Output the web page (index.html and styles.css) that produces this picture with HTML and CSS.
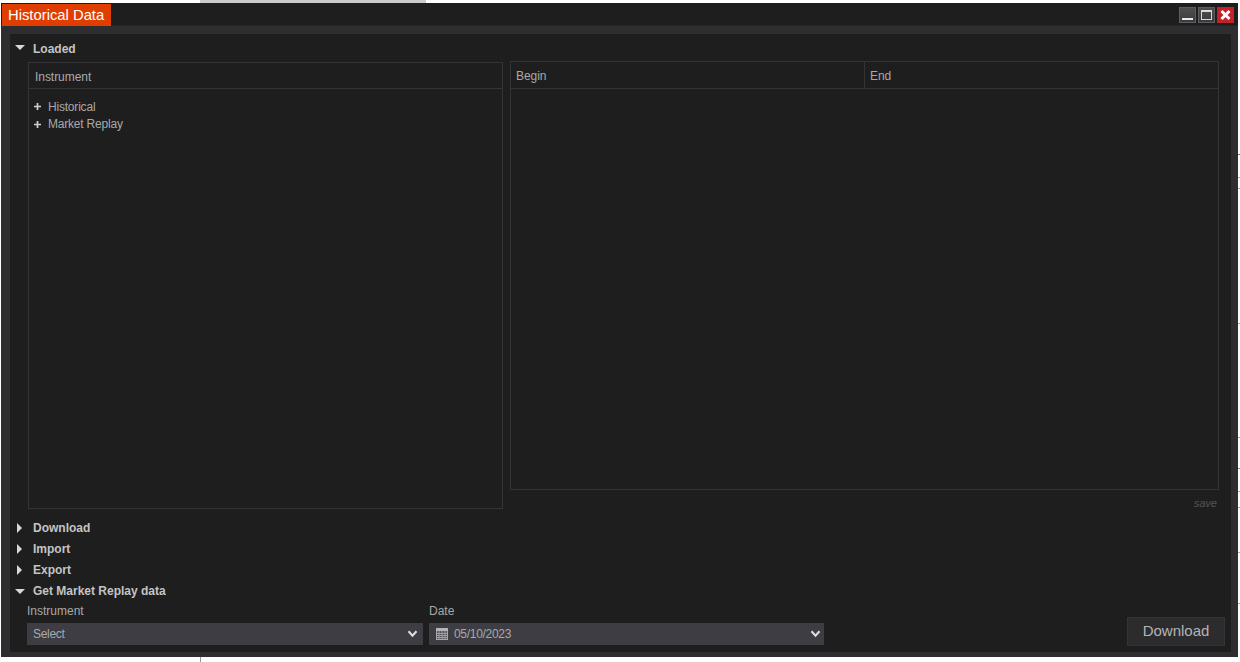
FILE: index.html
```html
<!DOCTYPE html>
<html lang="en">
<head>
<meta charset="utf-8">
<title>Historical Data</title>
<link rel="stylesheet" href="styles.css">
</head>
<body>
<div class="top-strip"><div class="top-strip-fill"></div></div>
<div class="window">
  <header class="titlebar">
    <div class="title">Historical Data</div>
    <div class="win-buttons">
      <div class="win-btn"><svg width="17" height="16" viewBox="0 0 17 16"><rect x="3" y="11" width="11" height="2" fill="#e8e8e8"/></svg></div>
      <div class="win-btn"><svg width="17" height="16" viewBox="0 0 17 16"><rect x="3.5" y="3.5" width="10" height="9" fill="none" stroke="#d8d8d8"/><rect x="3" y="3" width="11" height="2" fill="#d8d8d8"/></svg></div>
      <div class="win-btn close"><svg width="17" height="16" viewBox="0 0 17 16"><path d="M4.5 4l8 8M12.5 4l-8 8" stroke="#fff" stroke-width="3"/></svg></div>
    </div>
  </header>
  <main class="panel">
    <div class="section-head first"><span class="tri-down"></span>Loaded</div>
    <div class="loaded">
      <section class="box left-box">
        <div class="box-head"><div class="cell">Instrument</div></div>
        <ul class="tree">
          <li><svg class="plus" width="7" height="7" viewBox="0 0 7 7"><path d="M3.5 0v7M0 3.5h7" stroke="#d0d0d0" stroke-width="1.7"/></svg>Historical</li>
          <li><svg class="plus" width="7" height="7" viewBox="0 0 7 7"><path d="M3.5 0v7M0 3.5h7" stroke="#d0d0d0" stroke-width="1.7"/></svg>Market Replay</li>
        </ul>
      </section>
      <div class="right-col">
        <section class="box right-box">
          <div class="box-head">
            <div class="cell begin">Begin</div>
            <div class="cell end">End</div>
          </div>
        </section>
        <div class="save">save</div>
      </div>
    </div>
    <div class="section-head"><span class="tri-right"></span>Download</div>
    <div class="section-head"><span class="tri-right"></span>Import</div>
    <div class="section-head"><span class="tri-right"></span>Export</div>
    <div class="section-head"><span class="tri-down"></span>Get Market Replay data</div>
    <div class="replay">
      <div class="field instrument">
        <div class="label">Instrument</div>
        <div class="select">
          <span>Select</span>
          <svg class="chev" width="11" height="8" viewBox="0 0 12 9"><path d="M1.5 1.5L6 6.5l4.5-5" fill="none" stroke="#ddd" stroke-width="2.4"/></svg>
        </div>
      </div>
      <div class="field date">
        <div class="label">Date</div>
        <div class="select select-date">
          <svg class="cal" width="12" height="12" viewBox="0 0 12 12"><rect x="0.5" y="0.5" width="11" height="11" fill="#55555c" stroke="#a9a9ad"/><rect x="0" y="0" width="12" height="3" fill="#b5b5b8"/><path d="M0 5.5h12M0 7.5h12M0 9.5h12M3 3v9M6 3v9M9 3v9" stroke="#a9a9ad" stroke-width="0.8"/></svg>
          <span class="date-text">05/10/2023</span>
          <svg class="chev" width="11" height="8" viewBox="0 0 12 9"><path d="M1.5 1.5L6 6.5l4.5-5" fill="none" stroke="#ddd" stroke-width="2.4"/></svg>
        </div>
      </div>
      <button class="download" type="button">Download</button>
    </div>
  </main>
</div>
<div class="bottom-strip"><div class="tick"></div></div>
</body>
</html>
```
FILE: styles.css
```css
* { box-sizing: border-box; }
html, body { margin: 0; padding: 0; }
html { background: #fff; }
body {
  width: 1240px;
  height: 662px;
  overflow: hidden;
  font-family: "Liberation Sans", Arial, sans-serif;
  font-size: 12px;
  color: #a9a9a9;
  background-color: #fff;
  background-repeat: no-repeat;
  background-size: 2px 1px;
  background-image:
    linear-gradient(#a8a8a8, #a8a8a8), linear-gradient(#a8a8a8, #a8a8a8),
    linear-gradient(#a8a8a8, #a8a8a8), linear-gradient(#a8a8a8, #a8a8a8),
    linear-gradient(#a8a8a8, #a8a8a8), linear-gradient(#a8a8a8, #a8a8a8),
    linear-gradient(#a8a8a8, #a8a8a8), linear-gradient(#a8a8a8, #a8a8a8),
    linear-gradient(#a06a50, #a06a50), linear-gradient(#7f8fa8, #7f8fa8);
  background-position:
    1238px 177px, 1238px 188px, 1238px 323px, 1238px 437px,
    1238px 491px, 1238px 507px, 1238px 552px, 1238px 603px,
    1238px 154px, 1238px 468px;
}
.top-strip { height: 3px; padding-left: 200px; }
.top-strip-fill { width: 226px; height: 3px; background: #c9cbcd; }
.window {
  width: 1237px;
  height: 654px;
  margin-left: 1px;
  background: #2e2e30;
  display: flex;
  flex-direction: column;
}
.titlebar {
  height: 23px;
  flex: none;
  background: #1e1e1e;
  display: flex;
  justify-content: space-between;
  align-items: flex-start;
  padding: 1px 4px 0 1px;
  box-shadow: inset 0 -1px 0 #262626;
}
.title {
  width: 109px;
  height: 22px;
  background: #df3e00;
  color: #fff;
  font-size: 14.8px;
  line-height: 22px;
  padding-left: 6px;
  white-space: nowrap;
}
.win-buttons { display: flex; gap: 2px; padding-top: 3px; }
.win-btn {
  width: 17px;
  height: 16px;
  background: linear-gradient(#505052, #39393b);
  box-shadow: inset 0 0 0 1px #5e5e60;
}
.win-btn svg { display: block; }
.win-btn.close { background: #c42128; box-shadow: none; }
.panel {
  margin: 7px 6px 4px 8px;
  height: 620px;
  border: 1px solid #2f2f31;
  background: #1e1e1e;
  padding: 0 6px 0 7px;
  display: flex;
  flex-direction: column;
}
.section-head {
  height: 21px;
  line-height: 21px;
  font-weight: bold;
  font-size: 12px;
  color: #c4c4c4;
  padding-left: 16px;
  position: relative;
  display: flex;
  align-items: center;
  flex: none;
}
.section-head.first { height: 28px; padding-top: 2px; }
.tri-down {
  position: absolute;
  left: -2px;
  top: 8px;
  width: 0;
  height: 0;
  border-left: 5px solid transparent;
  border-right: 5px solid transparent;
  border-top: 5px solid #d8d8d8;
}
.section-head.first .tri-down { top: 11px; }
.tri-right {
  position: absolute;
  left: 0;
  top: 5px;
  width: 0;
  height: 0;
  border-top: 5px solid transparent;
  border-bottom: 5px solid transparent;
  border-left: 5px solid #d8d8d8;
}
.loaded {
  display: flex;
  flex: none;
  height: 447px;
  margin-left: 11px;
  gap: 7px;
  margin-bottom: 9px;
}
.box { border: 1px solid #343436; }
.left-box { width: 475px; height: 447px; }
.right-col { width: 709px; height: 447px; margin-top: -1px; display: flex; flex-direction: column; }
.right-box { height: 429px; flex: none; }
.box-head {
  height: 26px;
  border-bottom: 1px solid #343436;
  display: flex;
}
.right-box .box-head { height: 27px; }
.cell {
  font-size: 12px;
  line-height: 28px;
  padding-left: 6px;
  color: #a9a9a9;
  letter-spacing: -0.05px;
}
.begin { width: 354px; padding-left: 5px; border-right: 1px solid #343436; }
.end { flex: 1; padding-left: 5px; }
.tree { list-style: none; margin: 9px 0 0; padding: 0 0 0 5px; font-size: 12px; letter-spacing: -0.2px; }
.tree li { height: 17.6px; line-height: 18px; display: flex; align-items: center; color: #a9a9a9; }
.plus { margin-right: 7px; flex: none; }
.save {
  text-align: right;
  font-style: italic;
  font-size: 11px;
  color: #555;
  padding: 7px 2px 0 0;
  line-height: 13px;
}
.replay { display: flex; align-items: flex-start; margin-left: 10px; position: relative; }
.field { flex: none; display: flex; flex-direction: column; }
.instrument { width: 396px; margin-right: 6px; }
.date { width: 395px; }
.label { font-size: 12px; height: 21px; line-height: 19px; color: #a9a9a9; }
.select {
  height: 22px;
  background: #3d3d43;
  display: flex;
  align-items: center;
  padding: 0 5px 0 6px;
  color: #a9a9a9;
  font-size: 12px;
  letter-spacing: -0.3px;
}
.select-date { padding: 0 3px 0 7px; }
.select span:first-child { flex: 1; }
.date-text { flex: 1; margin-left: 6px; }
.chev { flex: none; }
.cal { flex: none; }
.download {
  position: absolute;
  left: 1100px;
  top: 15px;
  width: 98px;
  height: 29px;
  background: #2c2c2e;
  border: 1px solid #343436;
  color: #b4b4b4;
  font-family: "Liberation Sans", Arial, sans-serif;
  font-size: 15px;
  padding: 0 0 2px;
}
.bottom-strip { height: 5px; padding-left: 200px; }
.tick { width: 1px; height: 5px; background: #999; }
```
